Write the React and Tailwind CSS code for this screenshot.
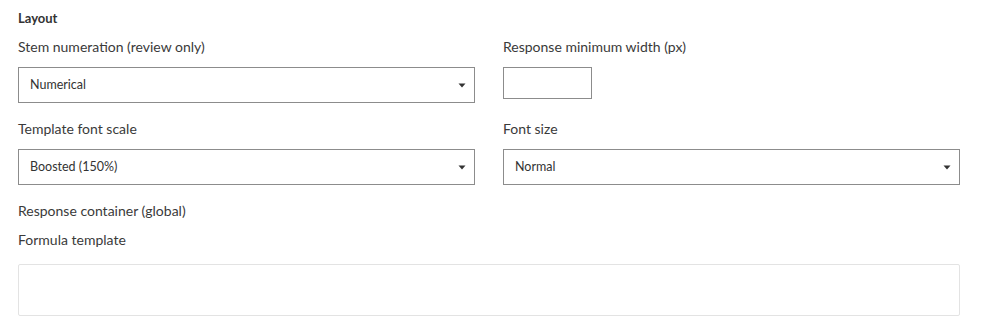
import React from 'react';

const Caret = () => (
  <svg width="8" height="5" viewBox="0 0 8 5" className="shrink-0">
    <path d="M0.5 0.5 H7.5 L4 4.5 Z" fill="#333" />
  </svg>
);

const Select = ({ value }) => (
  <div className="h-[36px] w-full border border-[#8c8c8c] bg-white flex items-center justify-between pl-[11px] pr-[8px]">
    <span className="text-[12.5px] text-[#333]">{value}</span>
    <Caret />
  </div>
);

const Label = ({ children, className = '' }) => (
  <div className={`text-[14px] leading-[20px] text-[#3a3a3a] ${className}`}>{children}</div>
);

export default function App() {
  return (
    <div className="w-[985px] h-[333px] bg-white pl-[18px] pr-[25px] pt-[8px]" style={{ fontFamily: 'Lato, "Open Sans", sans-serif' }}>
      <div className="text-[13px] font-bold leading-[20px] text-[#333]">Layout</div>

      <div className="grid grid-cols-2 gap-x-[28px] mt-[9px]">
        <div>
          <Label>Stem numeration (review only)</Label>
          <div className="mt-[10px]">
            <Select value="Numerical" />
          </div>
        </div>
        <div>
          <Label>Response minimum width (px)</Label>
          <div className="mt-[10px] h-[32px] w-[89px] border border-[#8c8c8c] bg-white" />
        </div>

        <div className="mt-[16px]">
          <Label>Template font scale</Label>
          <div className="mt-[10px]">
            <Select value="Boosted (150%)" />
          </div>
        </div>
        <div className="mt-[16px]">
          <Label>Font size</Label>
          <div className="mt-[10px]">
            <Select value="Normal" />
          </div>
        </div>
      </div>

      <Label className="mt-[16px]">Response container (global)</Label>
      <Label className="mt-[9px]">Formula template</Label>
      <div className="mt-[14px] h-[52px] w-full border border-[#e3e3e3] rounded-[2px] bg-white" />
    </div>
  );
}
